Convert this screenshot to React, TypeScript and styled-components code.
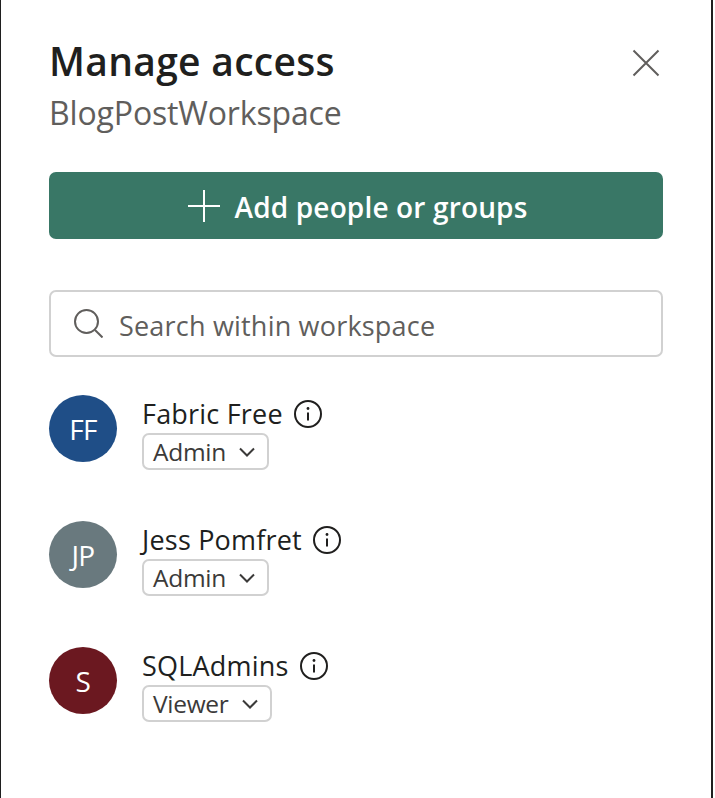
import React from "react";
import styled, { createGlobalStyle } from "styled-components";

const GlobalStyle = createGlobalStyle`
  html, body {
    margin: 0;
    background: #fff;
  }
  * {
    box-sizing: border-box;
  }
`;

const Panel = styled.div`
  width: 713px;
  height: 798px;
  padding: 36px 50px 0 48px;
  background: #fff;
  border-left: 1px solid #1f1f1f;
  border-right: 2px solid #1f1f1f;
  font-family: "Open Sans", "Noto Sans", sans-serif;
  color: #201f1e;
`;

const Header = styled.header`
  display: flex;
  justify-content: space-between;
  align-items: flex-start;
`;

const Title = styled.h1`
  margin: 0;
  font-size: 39px;
  line-height: 50px;
  font-weight: 600;
  letter-spacing: 0.3px;
`;

const Subtitle = styled.div`
  margin-top: 4px;
  font-size: 32px;
  line-height: 45px;
  color: #605e5c;
  letter-spacing: -0.15px;
`;

const CloseButton = styled.button`
  display: flex;
  margin: 13px 1px 0 0;
  padding: 0;
  border: 0;
  background: none;
  color: #605e5c;
`;

const AddButton = styled.button`
  display: flex;
  align-items: center;
  justify-content: center;
  gap: 15px;
  width: 614px;
  height: 67px;
  margin-top: 37px;
  padding: 0 0 0 3px;
  border: 0;
  border-radius: 7px;
  background: #397766;
  color: #fff;
  font-family: inherit;
  font-size: 28px;
  font-weight: 600;
  letter-spacing: 0.15px;
`;

const AddLabel = styled.span`
  padding-top: 2px;
`;

const SearchBox = styled.div`
  display: flex;
  align-items: center;
  gap: 16px;
  width: 614px;
  height: 67px;
  margin-top: 51px;
  padding-left: 23px;
  border: 2px solid #d1d1d1;
  border-radius: 7px;
  color: #605e5c;
  font-size: 27px;
  letter-spacing: 0.2px;
`;

const SearchPlaceholder = styled.span`
  padding-top: 4px;
`;

const MemberList = styled.ul`
  display: flex;
  flex-direction: column;
  gap: 51px;
  margin: 38px 0 0;
  padding: 0;
  list-style: none;
`;

const Member = styled.li`
  display: flex;
  align-items: flex-start;
  gap: 25px;
`;

const Avatar = styled.div<{ $color: string }>`
  display: flex;
  align-items: center;
  justify-content: center;
  flex: none;
  width: 68px;
  height: 67px;
  border-radius: 50%;
  background: ${(p) => p.$color};
  color: #fff;
  font-size: 28px;
  letter-spacing: -0.6px;
`;

const MemberInfo = styled.div`
  display: flex;
  flex-direction: column;
  align-items: flex-start;
`;

const NameRow = styled.div`
  display: flex;
  align-items: center;
  gap: 10px;
  height: 38px;
`;

const Name = styled.span`
  padding-bottom: 2px;
  font-size: 27px;
  letter-spacing: 0.2px;
`;

const RoleSelect = styled.div`
  display: flex;
  align-items: center;
  gap: 12px;
  height: 37px;
  padding: 0 11px 0 9px;
  border: 2px solid #d1d1d1;
  border-radius: 7px;
  color: #3b3a39;
  font-size: 24.5px;
  letter-spacing: -0.3px;
`;

function InfoIcon() {
  return (
    <svg width="30" height="30" viewBox="0 0 30 30" fill="none" stroke="#201f1e" strokeWidth="2">
      <circle cx="15" cy="15" r="13" />
      <path d="M15 13.5v8" />
      <circle cx="15" cy="9.5" r="1.4" fill="#201f1e" stroke="none" />
    </svg>
  );
}

function Chevron() {
  return (
    <svg width="18" height="12" viewBox="0 0 18 12" fill="none" stroke="#3b3a39" strokeWidth="2">
      <path d="M2 2.5l7 7 7-7" />
    </svg>
  );
}

const members = [
  { initials: "FF", name: "Fabric Free", role: "Admin", color: "#1f4e87" },
  { initials: "JP", name: "Jess Pomfret", role: "Admin", color: "#69797e" },
  { initials: "S", name: "SQLAdmins", role: "Viewer", color: "#6b1820" },
];

export default function App() {
  return (
    <>
      <GlobalStyle />
      <Panel>
        <Header>
          <div>
            <Title>Manage access</Title>
            <Subtitle>BlogPostWorkspace</Subtitle>
          </div>
          <CloseButton aria-label="Close">
            <svg width="28" height="28" viewBox="0 0 28 28" stroke="currentColor" strokeWidth="2">
              <path d="M1.5 1.5l25 25M26.5 1.5l-25 25" />
            </svg>
          </CloseButton>
        </Header>
        <AddButton>
          <svg width="32" height="32" viewBox="0 0 32 32" stroke="#fff" strokeWidth="2">
            <path d="M16 0v32M0 16h32" />
          </svg>
          <AddLabel>Add people or groups</AddLabel>
        </AddButton>
        <SearchBox>
          <svg width="29" height="29" viewBox="0 0 29 29" fill="none" stroke="#605e5c" strokeWidth="2">
            <circle cx="12.5" cy="12.5" r="11.5" />
            <path d="M21 21l7.5 7.5" />
          </svg>
          <SearchPlaceholder>Search within workspace</SearchPlaceholder>
        </SearchBox>
        <MemberList>
          {members.map((m) => (
            <Member key={m.name}>
              <Avatar $color={m.color}>{m.initials}</Avatar>
              <MemberInfo>
                <NameRow>
                  <Name>{m.name}</Name>
                  <InfoIcon />
                </NameRow>
                <RoleSelect>
                  {m.role}
                  <Chevron />
                </RoleSelect>
              </MemberInfo>
            </Member>
          ))}
        </MemberList>
      </Panel>
    </>
  );
}
